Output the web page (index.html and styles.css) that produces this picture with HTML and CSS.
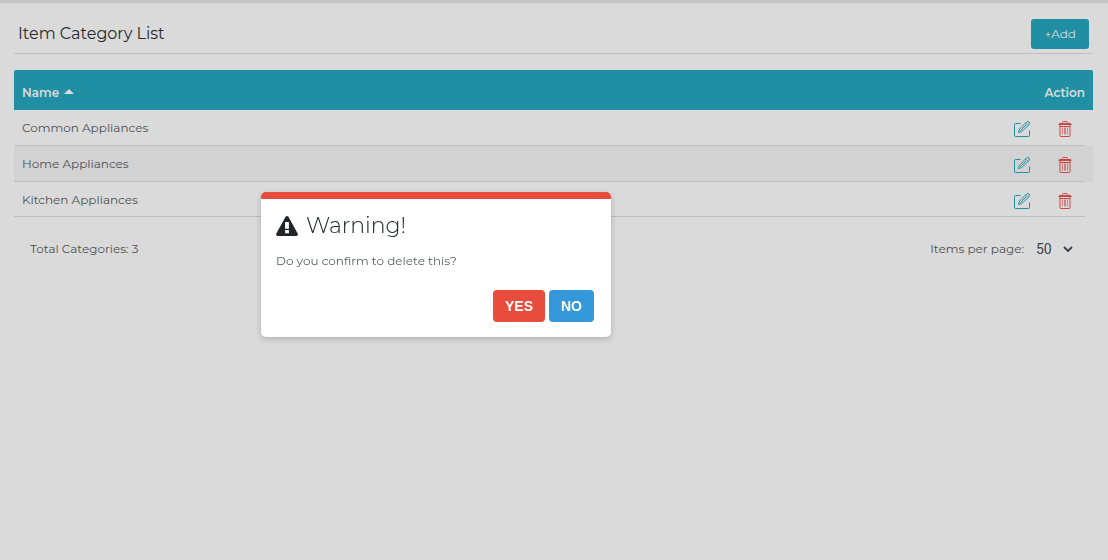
FILE: index.html
```html
<!DOCTYPE html>
<html lang="en">
<head>
<meta charset="utf-8">
<meta name="viewport" content="width=device-width, initial-scale=1">
<title>Item Category List</title>
<link rel="stylesheet" href="styles.css">
</head>
<body>
<svg class="symbols" aria-hidden="true">
  <symbol id="edit" viewBox="0 0 16 16">
    <path d="M6.500 2.500H1.500A1 1 0 0 0 .5 3.500V14.500A1 1 0 0 0 1.500 15.500H14.500A1 1 0 0 0 15.500 14.500V9.500"/>
    <path d="M4.500 11.500 5.500 8 12.500 1Q14 0 15 1T15 3.500L8 10.500ZM11.500 2 14 4.500M6.500 9.500 12 4"/>
  </symbol>
  <symbol id="trash" viewBox="0 0 14 16">
    <path d="M.5 3.500H13.500M4.500 3V1.500Q4.500.5 5.500.5H8.500Q9.500.5 9.500 1.500V3M1 2.500H13M2 5.500H12M2 4V14.500Q2 15.500 3 15.500H11Q12 15.500 12 14.500V4"/>
    <path class="ribs" d="M4.500 6.500V13.500M6.500 6.500V13.500M7.500 6.500V13.500M9.500 6.500V13.500"/>
  </symbol>
</svg>
<main class="page">
  <header class="page-head">
    <h1 class="page-title">Item Category List</h1>
    <button class="add" type="button">+Add</button>
  </header>
  <table class="list">
    <thead>
      <tr>
        <th scope="col" aria-sort="ascending">Name <svg class="sort" viewBox="0 0 10 5" aria-hidden="true"><path d="M0 5 5 0 10 5Z"/></svg></th>
        <th scope="col" class="action">Action</th>
      </tr>
    </thead>
    <tbody>
      <tr><td>Common Appliances</td><td class="action"><div class="tools"><button type="button" class="tool edit" aria-label="Edit Common Appliances"><svg><use href="#edit"/></svg></button><button type="button" class="tool trash" aria-label="Delete Common Appliances"><svg><use href="#trash"/></svg></button></div></td></tr>
      <tr><td>Home Appliances</td><td class="action"><div class="tools"><button type="button" class="tool edit" aria-label="Edit Home Appliances"><svg><use href="#edit"/></svg></button><button type="button" class="tool trash" aria-label="Delete Home Appliances"><svg><use href="#trash"/></svg></button></div></td></tr>
      <tr><td>Kitchen Appliances</td><td class="action"><div class="tools"><button type="button" class="tool edit" aria-label="Edit Kitchen Appliances"><svg><use href="#edit"/></svg></button><button type="button" class="tool trash" aria-label="Delete Kitchen Appliances"><svg><use href="#trash"/></svg></button></div></td></tr>
    </tbody>
  </table>
  <footer class="summary">
    <span>Total Categories: 3</span>
    <div class="pager">
      <label for="size">Items per page:</label>
      <span class="select-wrap">
        <select id="size"><option>50</option></select>
        <svg class="chevron" viewBox="0 0 10 6" aria-hidden="true"><path d="M1 1 5 5 9 1"/></svg>
      </span>
    </div>
  </footer>
</main>
<div class="overlay"></div>
<section class="dialog" role="alertdialog" aria-labelledby="dialog-title" aria-describedby="dialog-text">
  <h2 class="dialog-title" id="dialog-title">
    <svg class="warn" viewBox="0 0 22 20" aria-hidden="true"><path fill-rule="evenodd" d="M9.600.8Q11-.8 12.400.8L21.700 17.500Q22.500 19.700 20.300 20H1.700Q-.5 19.700.3 17.500ZM9.100 6V12.800H12.900V6ZM9.100 14V17.300H12.900V14Z"/></svg>
    Warning!
  </h2>
  <p class="dialog-text" id="dialog-text">Do you confirm to delete this?</p>
  <div class="dialog-actions">
    <button type="button" class="choice yes">YES</button>
    <button type="button" class="choice no">NO</button>
  </div>
</section>
</body>
</html>
```
FILE: styles.css
```css
* { box-sizing: border-box; }
body {
  margin: 0;
  min-height: 100vh;
  background: #fff;
  border-top: 3px solid #e5e5e5;
  font-family: Montserrat, Inter, sans-serif;
  font-size: 12px;
  line-height: 20px;
  color: #5c6066;
}
button, select { font: inherit; }
.symbols { position: absolute; width: 0; height: 0; }
.page { padding: 12px 15px 0 14px; }
.page-head {
  display: flex;
  align-items: center;
  justify-content: space-between;
  height: 39px;
  padding: 0 4px;
  border-bottom: 1px solid #e0e0e0;
}
.page-title {
  margin: 0;
  font-size: 16px;
  font-weight: 400;
  color: #303236;
}
.add {
  height: 30px;
  padding: 0 13px;
  border: 0;
  border-radius: 3px;
  background: #26a8bf;
  color: #fff;
}
.list {
  width: 100%;
  margin-top: 16px;
  border-collapse: separate;
  border-spacing: 0;
}
.list th {
  height: 40px;
  padding: 5px 8px 0;
  background: #26a8bf;
  color: #fff;
  font-weight: 600;
  text-align: left;
}
.list th:first-child { border-top-left-radius: 2px; }
.list th:last-child { border-top-right-radius: 2px; }
.list .action { width: 90px; text-align: right; }
.sort { width: 10px; height: 5px; margin-left: 2px; vertical-align: 3px; fill: #fff; }
.list td {
  height: 36px;
  padding: 0 8px;
  background: linear-gradient(#e0e0e0, #e0e0e0) left bottom / 100% 1px no-repeat;
}
.list td.action { background-size: calc(100% - 8px) 1px; }
.list tbody tr:nth-child(even) { background: #f6f6f6; }
.list tbody tr:last-child td { height: 35px; }
.tools { display: flex; justify-content: flex-end; gap: 28px; padding-right: 13px; }
.tool { display: flex; padding: 2px 0 0; border: 0; background: none; }
.tool svg { height: 16px; fill: none; stroke: currentColor; }
.edit svg { width: 16px; }
.trash svg { width: 14px; }
.edit { color: #26a8bf; }
.trash { color: #ef5350; }
.ribs { opacity: .6; }
.summary {
  display: flex;
  align-items: center;
  justify-content: space-between;
  padding: 22px 16px 0;
}
.pager { display: flex; align-items: center; gap: 12px; }
.select-wrap { display: grid; align-items: center; width: 41px; }
.select-wrap > * { grid-area: 1 / 1; }
.select-wrap select {
  appearance: none;
  width: 100%;
  padding: 0;
  border: 0;
  background: none;
  color: #495057;
  font-family: Roboto, sans-serif;
  font-size: 14px;
}
.chevron {
  justify-self: end;
  width: 10px;
  height: 6px;
  margin-right: 4px;
  fill: none;
  stroke: #495057;
  stroke-width: 2;
  pointer-events: none;
}
.overlay { position: fixed; inset: 0; background: rgba(0, 0, 0, .145); }
.dialog {
  position: absolute;
  top: 192px;
  left: 261px;
  width: 350px;
  padding: 13px 17px 15px 15px;
  border-top: 7px solid #e74c3c;
  border-radius: 5px;
  background: #fff;
  box-shadow: 0 2px 6px rgba(0, 0, 0, .2);
}
.dialog-title {
  display: flex;
  align-items: center;
  gap: 8px;
  margin: 0;
  font-size: 22px;
  font-weight: 300;
  line-height: 28px;
  color: #212529;
}
.warn { width: 22px; height: 20px; fill: #212529; }
.dialog-text { margin: 11px 0 19px; }
.dialog-actions { display: flex; justify-content: flex-end; gap: 4px; }
.choice {
  height: 32px;
  padding: 0 12px;
  border: 0;
  border-radius: 4px;
  color: #fff;
  font-family: "Liberation Sans", Arial, sans-serif;
  font-size: 14px;
  font-weight: 700;
}
.yes { background: #e74c3c; }
.no { background: #3498db; }
```
